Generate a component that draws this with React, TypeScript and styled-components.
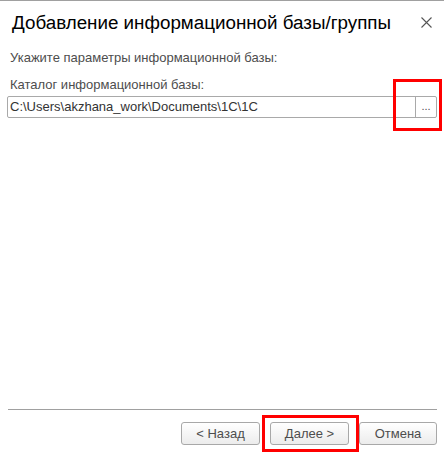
import React from "react";
import styled, { createGlobalStyle } from "styled-components";

const Global = createGlobalStyle`
  html, body { margin: 0; padding: 0; background: #ffffff; }
  body { font-family: Arial, "Liberation Sans", sans-serif; }
  * { box-sizing: border-box; }
`;

const Dialog = styled.div`
  width: 444px;
  height: 456px;
  display: flex;
  flex-direction: column;
  border-top: 1px solid #a0a0a0;
  background: #fff;
  position: relative;
  overflow: hidden;
`;

const Header = styled.div`
  display: flex;
  align-items: center;
  justify-content: space-between;
  height: 41px;
  padding: 2px 12px 0 12px;
`;

const Title = styled.h1`
  margin: 0;
  font-family: Arial, "Liberation Sans", sans-serif;
  font-weight: normal;
  font-size: 18.8px;
  color: #000;
  white-space: nowrap;
`;

const CloseButton = styled.div`
  width: 12px;
  height: 12px;
  display: flex;
  align-items: center;
  justify-content: center;
`;

const Body = styled.div`
  flex: 1;
  display: flex;
  flex-direction: column;
  padding: 8px 7px 0 7px;
`;

const Label = styled.div<{ $mt?: number }>`
  font-size: 13px;
  color: #4d4d4d;
  line-height: 15px;
  padding-left: 3px;
  margin-top: ${(p) => p.$mt ?? 0}px;
`;

const FieldRow = styled.div`
  position: relative;
  margin-top: 4px;
  display: flex;
  height: 22px;
  border: 1px solid #a9a9a9;
  border-radius: 2px;
  background: #fff;
`;

const FieldText = styled.div`
  flex: 1;
  font-size: 13px;
  color: #333;
  line-height: 20px;
  padding-left: 2px;
  white-space: nowrap;
  overflow: hidden;
`;

const DotsButton = styled.div`
  width: 21px;
  border-left: 1px solid #a9a9a9;
  display: flex;
  align-items: center;
  justify-content: center;
  font-size: 11px;
  color: #4d4d4d;
  padding-bottom: 2px;
`;

const Highlight = styled.div<{ $l: number; $t: number; $r: number; $b: number }>`
  position: absolute;
  left: ${(p) => p.$l}px;
  top: ${(p) => p.$t}px;
  right: ${(p) => p.$r}px;
  bottom: ${(p) => p.$b}px;
  border: 3px solid #ff0000;
  pointer-events: none;
`;

const Footer = styled.div`
  margin: 0 7px 0 8px;
  border-top: 1px solid #a0a0a0;
  padding: 12px 0 11px 0;
  display: flex;
  justify-content: flex-end;
  gap: 10px;
`;

const ButtonWrap = styled.div`
  position: relative;
  display: flex;
`;

const Button = styled.div<{ $w: number }>`
  width: ${(p) => p.$w}px;
  height: 23px;
  border: 1px solid #a8a8a8;
  border-radius: 3px;
  background: linear-gradient(#ffffff, #ececec);
  display: flex;
  align-items: center;
  justify-content: center;
  font-size: 13px;
  color: #4d4d4d;
`;

export default function App() {
  return (
    <>
      <Global />
      <Dialog>
        <Header>
          <Title>Добавление информационной базы/группы</Title>
          <CloseButton>
            <svg width="11" height="11" viewBox="0 0 11 11">
              <path d="M0.5 0.5 L10.5 10.5 M10.5 0.5 L0.5 10.5" stroke="#555" strokeWidth="1.1" fill="none" />
            </svg>
          </CloseButton>
        </Header>
        <Body>
          <Label>Укажите параметры информационной базы:</Label>
          <Label $mt={12}>Каталог информационной базы:</Label>
          <FieldRow>
            <FieldText>C:\Users\akzhana_work\Documents\1C\1C</FieldText>
            <DotsButton>...</DotsButton>
            <Highlight $l={385} $t={-18} $r={-6} $b={-14} />
          </FieldRow>
        </Body>
        <Footer>
          <Button $w={79}>&lt; Назад</Button>
          <ButtonWrap>
            <Button $w={79}>Далее &gt;</Button>
            <Highlight $l={-8} $t={-7} $r={-10} $b={-7} />
          </ButtonWrap>
          <Button $w={78}>Отмена</Button>
        </Footer>
      </Dialog>
    </>
  );
}
